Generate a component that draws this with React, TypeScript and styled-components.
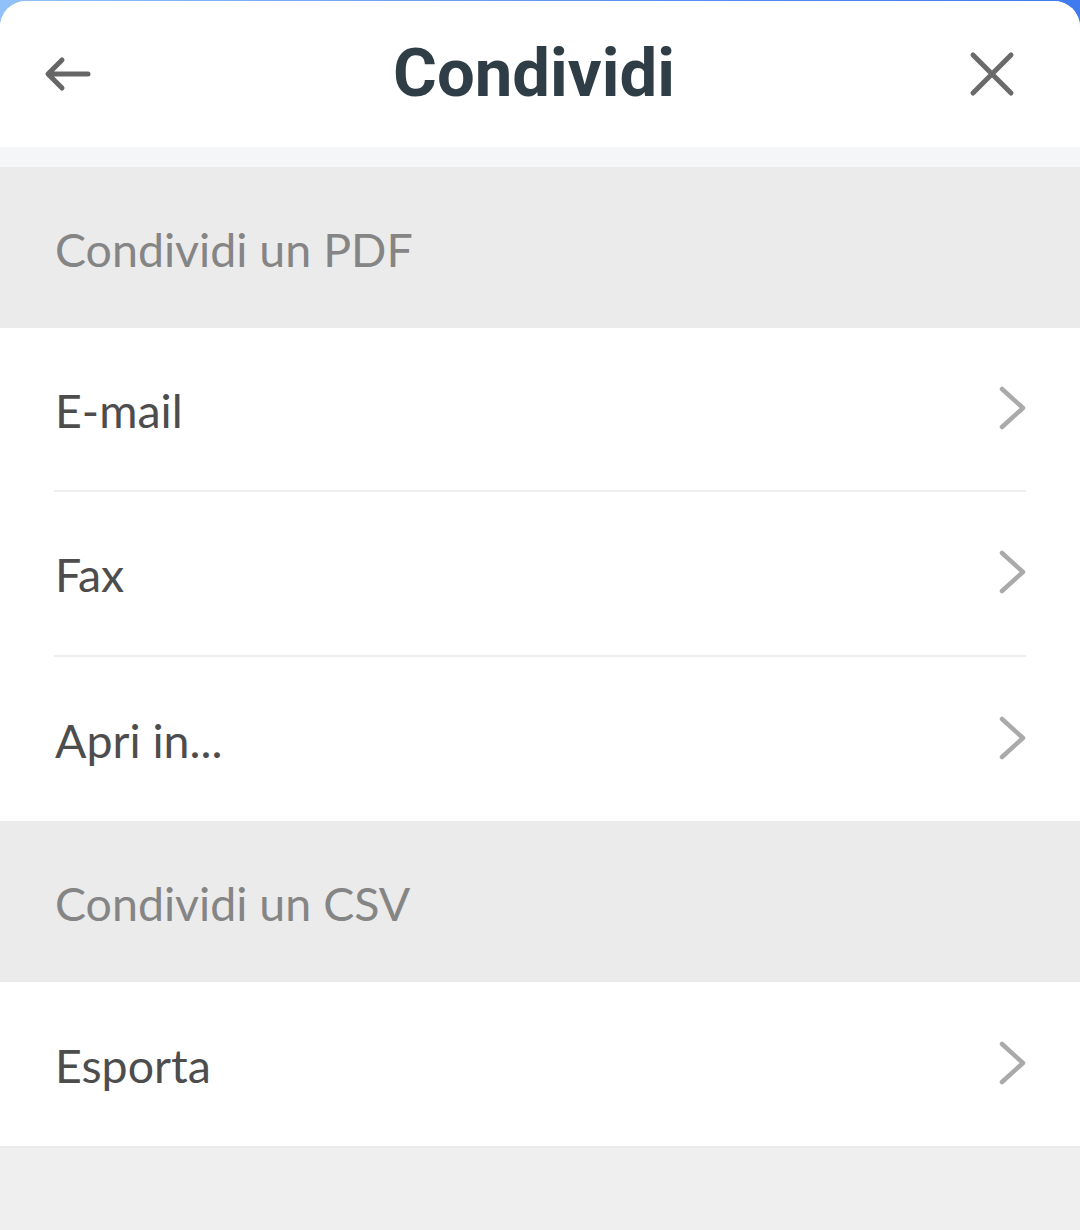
import React from 'react';
import styled, { createGlobalStyle } from "styled-components";

const GlobalStyle = createGlobalStyle`
  html, body {
    margin: 0;
    padding: 0;
    background: linear-gradient(90deg, #92c0f8 0%, #5b8ff2 60%, #3f7af0 100%);
  }
  * {
    box-sizing: border-box;
  }
`

const Sheet = styled.div`
  margin-top: 1px;
  width: 1080px;
  height: 1229px;
  background-color: #efefef;
  border-radius: 26px 26px 0 0;
  overflow: hidden;
  display: flex;
  flex-direction: column;
`

const Header = styled.div`
  height: 146px;
  background-color: #ffffff;
  display: flex;
  align-items: center;
  justify-content: space-between;
  padding: 0 64px 0 44px;
  border-bottom: 20px solid #f5f6f8;
  box-sizing: content-box;
`

const Title = styled.div`
  font-family: Roboto, "Liberation Sans", sans-serif;
  font-weight: 700;
  font-size: 67px;
  color: #2f3e46;
  margin-left: 8px;
  padding-bottom: 2px;
`

const IconButton = styled.div`
  width: 48px;
  height: 48px;
  display: flex;
  align-items: center;
  justify-content: center;
`

const SectionHeader = styled.div`
  height: 161px;
  background-color: #ebebeb;
  display: flex;
  align-items: center;
  padding: 3px 55px 0;
  font-family: Lato, "Open Sans", sans-serif;
  font-size: 46.5px;
  color: #858585;
`

const Group = styled.div`
  background-color: #ffffff;
  padding: 0 52px 0 54px;
`

const Row = styled.div<{ last?: boolean }>`
  height: 164.3px;
  display: flex;
  align-items: center;
  justify-content: space-between;
  border-bottom: ${({ last }) => (last ? "none" : "2px solid #eeeeee")};
  margin-right: 2px;
  font-family: Lato, "Open Sans", sans-serif;
  font-size: 46.5px;
  color: #4d4d4d;
  cursor: pointer;
`

const RowLabel = styled.span`
  padding-left: 1px;
  padding-top: 2px;
`

const ChevronBox = styled.span`
  display: flex;
  margin-right: -2px;
  padding-bottom: 2px;
`

const BottomFill = styled.div`
  flex: 1;
  background-color: #efefef;
  border-top: 2px solid #ebebeb;
`

function BackArrow() {
  return (
    <svg width="48" height="40" viewBox="0 0 48 40" fill="none">
      <path d="M44 20 H5 M18 6 L4 20 L18 34" stroke="#666666" strokeWidth="5" strokeLinecap="round" strokeLinejoin="round" />
    </svg>
  );
}

function CloseIcon() {
  return (
    <svg width="46" height="46" viewBox="0 0 46 46" fill="none">
      <path d="M4 4 L42 42 M42 4 L4 42" stroke="#6a6a6a" strokeWidth="5" strokeLinecap="round" />
    </svg>
  );
}

function Chevron() {
  return (
    <svg width="30" height="46" viewBox="0 0 30 46" fill="none">
      <path d="M4 4 L25 23 L4 42" stroke="#aaaaaa" strokeWidth="4.5" strokeLinecap="round" strokeLinejoin="round" />
    </svg>
  );
}

const pdfOptions = ["E-mail", "Fax", "Apri in..."];
const csvOptions = ["Esporta"];

function OptionGroup({ items }: { items: string[] }) {
  return (
    <Group>
      {items.map((item, i) => (
        <Row key={item} last={i === items.length - 1}>
          <RowLabel>{item}</RowLabel>
          <ChevronBox><Chevron /></ChevronBox>
        </Row>
      ))}
    </Group>
  );
}

export default function App() {
  return (
    <>
      <GlobalStyle />
      <Sheet>
        <Header>
          <IconButton><BackArrow /></IconButton>
          <Title>Condividi</Title>
          <IconButton><CloseIcon /></IconButton>
        </Header>
        <SectionHeader>Condividi un PDF</SectionHeader>
        <OptionGroup items={pdfOptions} />
        <SectionHeader>Condividi un CSV</SectionHeader>
        <OptionGroup items={csvOptions} />
        <BottomFill />
      </Sheet>
    </>
  );
}
